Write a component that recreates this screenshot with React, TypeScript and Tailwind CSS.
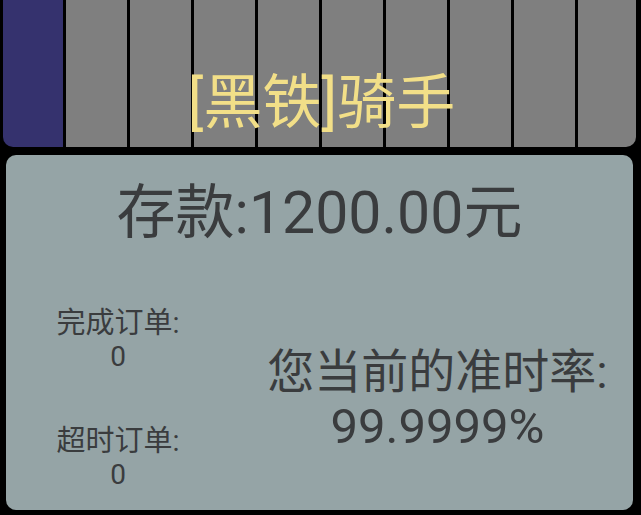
import React from "react";

const font = { fontFamily: 'Roboto, "Noto Sans CJK SC", sans-serif' };

function LevelBar() {
  // ten level slots; the first one is filled
  const slots = Array.from({ length: 10 }, (_, i) => i);
  return (
    <div className="relative h-[147px] ml-[3px] w-[633px] flex overflow-hidden rounded-b-[10px]">
      {slots.map((i) => {
        const base = "h-full";
        if (i === 0) return <div key={i} className={`${base} w-[60px] bg-[#35326e]`} />;
        if (i === 9)
          return <div key={i} className={`${base} w-[61px] bg-[#7f7f7f] border-l-[3px] border-black`} />;
        return <div key={i} className={`${base} w-[64px] bg-[#7f7f7f] border-l-[3px] border-black`} />;
      })}
      <div className="absolute inset-x-0 top-[73px] flex justify-center">
        <span className="text-[59px] leading-none text-[#f2df88] pl-[4px]" style={font}>
          [黑铁]骑手
        </span>
      </div>
    </div>
  );
}

function Stat({ label, value }: { label: string; value: string }) {
  return (
    <div className="flex flex-col items-center text-[29px] leading-[34px] text-[#3a3c3e]">
      <span>{label}</span>
      <span className="text-[28px]">{value}</span>
    </div>
  );
}

export default function App() {
  return (
    <div className="w-[641px] h-[515px] bg-black overflow-hidden" style={font}>
      <LevelBar />
      <div className="mt-[8px] ml-[6px] w-[627px] h-[355px] bg-[#95a4a6] rounded-[10px] flex flex-col">
        <div className="pt-[24px] text-center text-[59px] leading-[67px] text-[#3a3c3e]">
          存款:1200.00元
        </div>
        <div className="flex mt-[60px]">
          <div className="w-[224px] flex flex-col gap-[50px]">
            <Stat label="完成订单:" value="0" />
            <Stat label="超时订单:" value="0" />
          </div>
          <div className="flex-1 pl-[12px] flex flex-col items-center justify-center leading-[55px] text-[#3a3c3e]">
            <span className="text-[47px]">您当前的准时率:</span>
            <span className="text-[49px]">99.9999%</span>
          </div>
        </div>
      </div>
    </div>
  );
}
